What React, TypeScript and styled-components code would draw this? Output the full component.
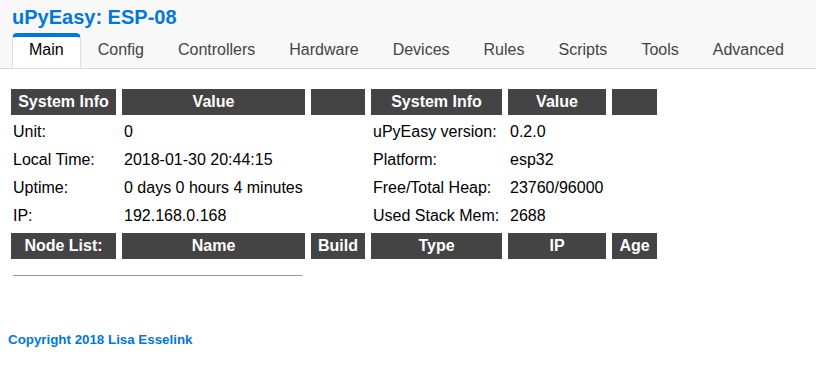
import { createGlobalStyle, styled } from "styled-components";

const GlobalStyle = createGlobalStyle`
  body {
    margin: 0;
    background: #fff;
    font-family: "Liberation Sans", Arial, sans-serif;
    color: #000;
  }
`;

const Header = styled.header`
  background-color: #f8f8f8;
  border-bottom: 1px solid #ddd;
  padding: 6px 12px 0;
  height: 62px;
`;

const Title = styled.h1`
  margin: 0;
  font-size: 20px;
  line-height: 23px;
  font-weight: bold;
  color: #07d;
`;

const MenuBar = styled.nav`
  display: flex;
  margin-top: 4px;
`;

const MenuItem = styled.a<{ $active?: boolean }>`
  display: block;
  padding: 4px 16px 8px;
  font-size: 16px;
  line-height: 18px;
  white-space: nowrap;
  text-decoration: none;
  color: ${(p) => (p.$active ? "#000" : "#444")};
  background-color: ${(p) => (p.$active ? "#fff" : "transparent")};
  border: solid transparent;
  border-width: 4px 1px 1px;
  border-color: ${(p) => (p.$active ? "#07d #ddd #fff" : "transparent")};
  border-radius: 5px 5px 0 0;
`;

const Content = styled.main`
  padding: 20px 0 0 11px;
`;

const InfoGrid = styled.div`
  display: grid;
  grid-template-columns: 105px 183px 54px 131px 98px 45px;
  grid-template-rows: 26px repeat(4, 22px) 26px 20px;
  gap: 6px;
  width: max-content;
`;

const HeadCell = styled.div`
  background-color: #444;
  color: #fff;
  font-size: 16px;
  font-weight: bold;
  line-height: 26px;
  text-align: center;
  white-space: nowrap;
`;

const Cell = styled.div`
  padding: 2px 2px;
  font-size: 16px;
  line-height: 18px;
  white-space: nowrap;
`;

const RuleCell = styled.div`
  grid-column: 1 / span 2;
`;

const Rule = styled.div`
  margin: 10px 3px 0 2px;
  border-top: 1px solid #999;
`;

const Footer = styled.footer`
  padding: 47px 8px 0;
  font-size: 13.33px;
  line-height: 15px;
  font-weight: bold;
  color: #07d;
`;

const tabs = [
  "Main",
  "Config",
  "Controllers",
  "Hardware",
  "Devices",
  "Rules",
  "Scripts",
  "Tools",
  "Advanced",
];

const rows: [string, string, string, string][] = [
  ["Unit:", "0", "uPyEasy version:", "0.2.0"],
  ["Local Time:", "2018-01-30 20:44:15", "Platform:", "esp32"],
  ["Uptime:", "0 days 0 hours 4 minutes", "Free/Total Heap:", "23760/96000"],
  ["IP:", "192.168.0.168", "Used Stack Mem:", "2688"],
];

const headers = ["System Info", "Value", "", "System Info", "Value", ""];
const nodeHeaders = ["Node List:", "Name", "Build", "Type", "IP", "Age"];

export default function App() {
  return (
    <>
      <GlobalStyle />
      <Header>
        <Title>uPyEasy: ESP-08</Title>
        <MenuBar>
          {tabs.map((t) => (
            <MenuItem key={t} $active={t === "Main"}>
              {t}
            </MenuItem>
          ))}
        </MenuBar>
      </Header>
      <Content>
        <InfoGrid>
          {headers.map((h, i) => (
            <HeadCell key={"h" + i}>{h}</HeadCell>
          ))}
          {rows.map((r) => [
            <Cell key={r[0] + "a"}>{r[0]}</Cell>,
            <Cell key={r[0] + "b"}>{r[1]}</Cell>,
            <Cell key={r[0] + "c"} />,
            <Cell key={r[0] + "d"}>{r[2]}</Cell>,
            <Cell key={r[0] + "e"}>{r[3]}</Cell>,
            <Cell key={r[0] + "f"} />,
          ])}
          {nodeHeaders.map((h) => (
            <HeadCell key={"n" + h}>{h}</HeadCell>
          ))}
          <RuleCell>
            <Rule />
          </RuleCell>
        </InfoGrid>
      </Content>
      <Footer>Copyright 2018 Lisa Esselink</Footer>
    </>
  );
}
